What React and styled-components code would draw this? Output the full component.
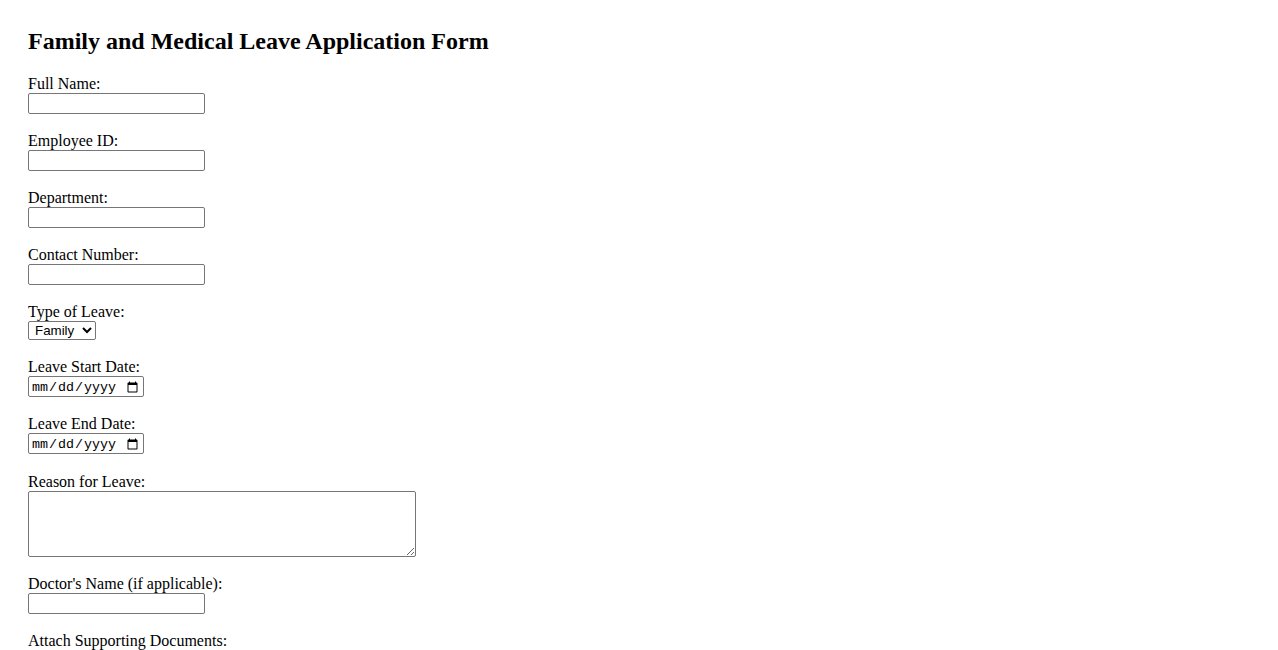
import React from 'react';
import styled, { createGlobalStyle } from 'styled-components';

const GlobalStyle = createGlobalStyle`
  body {
    margin: 0;
    background: #fff;
    color: #000;
    font-family: "Liberation Serif", "Times New Roman", serif;
    font-size: 16px;
  }
`;

const Page = styled.div`
  padding: 28px 28px;
`;

const Title = styled.h2`
  margin: 0 0 20px;
  font-size: 24px;
  font-weight: bold;
  line-height: normal;
`;

const Form = styled.form`
  display: flex;
  flex-direction: column;
  align-items: flex-start;
`;

const Field = styled.div`
  display: flex;
  flex-direction: column;
  align-items: flex-start;
  margin-bottom: ${(p) => p.$gap || 18}px;
`;

const Label = styled.label`
  line-height: 18px;
`;

const controlBase = `
  box-sizing: border-box;
  margin: 0;
  border: 1px solid #767676;
  border-radius: 2px;
  background: #fff;
  color: #000;
`;

const TextInput = styled.input`
  ${controlBase}
  width: 177px;
  height: 21px;
  padding: 1px 2px;
  font: 13.33px "Liberation Sans", Arial, sans-serif;
`;

const DateInput = styled.input`
  ${controlBase}
  width: 116px;
  height: 21px;
  padding: 2px 2px 0;
  font: 13.33px "Liberation Mono", monospace;
`;

const Select = styled.select`
  ${controlBase}
  width: 68px;
  height: 19px;
  padding: 0 0 0 2px;
  font: 13.33px "Liberation Sans", Arial, sans-serif;
`;

const TextArea = styled.textarea`
  ${controlBase}
  width: 388px;
  height: 66px;
  padding: 2px;
  font: 13.33px "Liberation Mono", monospace;
`;

const FileInput = styled.input`
  margin: 0;
  font: 13.33px "Liberation Sans", Arial, sans-serif;
`;

const Submit = styled.button`
  font: 13.33px "Liberation Sans", Arial, sans-serif;
`;

const textFields = [
  { id: 'fullName', label: 'Full Name:' },
  { id: 'employeeId', label: 'Employee ID:' },
  { id: 'department', label: 'Department:' },
  { id: 'contact', label: 'Contact Number:' },
];

export default function App() {
  return (
    <Page>
      <GlobalStyle />
      <Title>Family and Medical Leave Application Form</Title>
      <Form onSubmit={(e) => e.preventDefault()}>
        {textFields.map((f) => (
          <Field key={f.id}>
            <Label htmlFor={f.id}>{f.label}</Label>
            <TextInput type="text" id={f.id} name={f.id} />
          </Field>
        ))}
        <Field>
          <Label htmlFor="leaveType">Type of Leave:</Label>
          <Select id="leaveType" name="leaveType" defaultValue="family">
            <option value="family">Family</option>
            <option value="medical">Medical</option>
          </Select>
        </Field>
        <Field>
          <Label htmlFor="startDate">Leave Start Date:</Label>
          <DateInput type="date" id="startDate" name="startDate" />
        </Field>
        <Field $gap={19}>
          <Label htmlFor="endDate">Leave End Date:</Label>
          <DateInput type="date" id="endDate" name="endDate" />
        </Field>
        <Field>
          <Label htmlFor="reason">Reason for Leave:</Label>
          <TextArea id="reason" name="reason" />
        </Field>
        <Field>
          <Label htmlFor="doctor">Doctor's Name (if applicable):</Label>
          <TextInput type="text" id="doctor" name="doctor" />
        </Field>
        <Field>
          <Label htmlFor="docs">Attach Supporting Documents:</Label>
          <FileInput type="file" id="docs" name="docs" multiple />
        </Field>
        <Submit type="submit">Submit Application</Submit>
      </Form>
    </Page>
  );
}
